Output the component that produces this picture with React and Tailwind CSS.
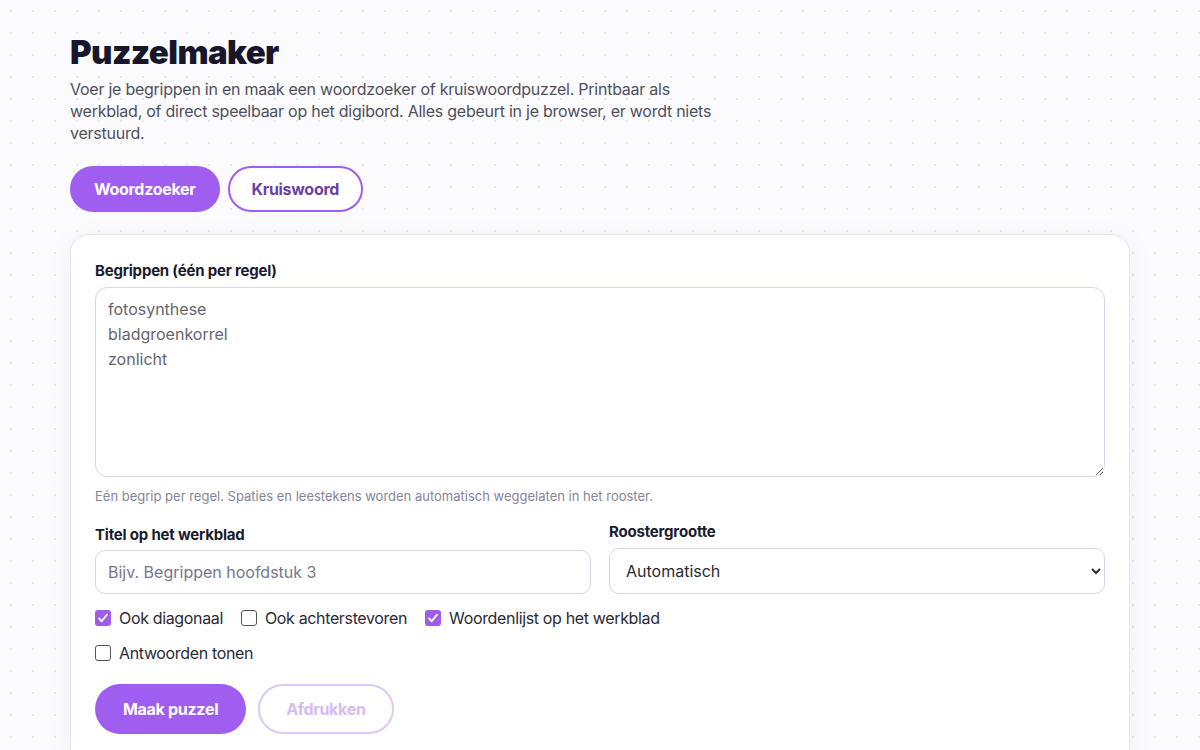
import { useState } from "react";

const font = { fontFamily: "Inter, 'Noto Sans', sans-serif" };

const Check = ({ checked, onChange, label }) => (
  <label className="flex items-center gap-[8px] cursor-pointer text-[16px] leading-[22px] tracking-[-0.35px] text-[#2a2a35]">
    <span
      onClick={onChange}
      className={
        checked
          ? "flex h-[16px] w-[16px] items-center justify-center rounded-[3px] bg-[#9f5ce8]"
          : "flex h-[16px] w-[16px] items-center justify-center rounded-[3px] border border-[#555] bg-white"
      }
    >
      {checked && (
        <svg viewBox="0 0 16 16" className="h-[14px] w-[14px]">
          <path d="M3.5 8.5l3 3.2 6-7.4" fill="none" stroke="white" strokeWidth="2.2" strokeLinecap="round" strokeLinejoin="round" />
        </svg>
      )}
    </span>
    <span onClick={onChange}>{label}</span>
  </label>
);

const tabOn = "h-[46px] rounded-full border-2 border-[#a05ef0] bg-[#a05ef0] px-[22px] text-[16px] font-bold tracking-[-0.3px] text-white";
const tabOff = "h-[46px] rounded-full border-2 border-[#a05ef0] bg-white px-[22px] text-[16px] font-bold tracking-[-0.3px] text-[#6b3fa6]";

export default function App() {
  const [mode, setMode] = useState("woord");
  const [opts, setOpts] = useState({ diag: true, back: false, list: true, answers: false });
  const toggle = (k) => setOpts({ ...opts, [k]: !opts[k] });

  return (
    <div
      style={font}
      className="min-h-[750px] bg-[#fbfbfd] bg-[radial-gradient(circle,#e4e4ec_1px,transparent_1.5px)] bg-[length:22px_22px] px-[70px] pt-[32px]"
    >
      <div className="w-[1060px]">
        <h1 className="text-[33px] font-black leading-[40px] tracking-[-0.6px] text-[#17162b]">Puzzelmaker</h1>
        <p className="mt-[6px] max-w-[660px] text-[16px] leading-[22px] tracking-[-0.25px] text-[#50505c]">
          Voer je begrippen in en maak een woordzoeker of kruiswoordpuzzel. Printbaar als werkblad, of direct speelbaar op het digibord. Alles gebeurt in je browser, er wordt niets verstuurd.
        </p>

        <div className="mt-[22px] flex gap-[8px]">
          <button onClick={() => setMode("woord")} className={mode === "woord" ? tabOn : tabOff}>
            Woordzoeker
          </button>
          <button onClick={() => setMode("kruis")} className={mode === "kruis" ? tabOn : tabOff}>
            Kruiswoord
          </button>
        </div>

        <div className="mt-[22px] rounded-[18px] border border-[#e6e2f6] bg-white px-[24px] pt-[26px] pb-[30px] shadow-[0_6px_24px_rgba(120,100,180,0.08)]">
          <label className="block text-[15px] font-bold leading-[20px] tracking-[-0.2px] text-[#1c1b2e]">Begrippen (één per regel)</label>
          <textarea
            defaultValue={"fotosynthese\nbladgroenkorrel\nzonlicht"}
            className="mt-[6px] block h-[190px] w-full resize-y rounded-[12px] border border-[#d9d5ea] px-[12px] py-[9px] text-[16px] leading-[25px] text-[#666670] outline-none"
          />
          <p className="mt-[10px] text-[13px] leading-[18px] text-[#85859a]">
            Eén begrip per regel. Spaties en leestekens worden automatisch weggelaten in het rooster.
          </p>

          <div className="mt-[17px] grid grid-cols-2 gap-[18px]">
            <div className="pt-[3px]">
              <label className="block text-[15px] font-bold leading-[20px] tracking-[-0.2px] text-[#1c1b2e]">Titel op het werkblad</label>
              <input
                placeholder="Bijv. Begrippen hoofdstuk 3"
                className="mt-[5px] block h-[44px] w-full rounded-[10px] border border-[#d9d5ea] px-[12px] text-[16px] text-[#2a2a35] outline-none placeholder:text-[#77778a]"
              />
            </div>
            <div>
              <label className="block text-[15px] font-bold leading-[20px] tracking-[-0.2px] text-[#1c1b2e]">Roostergrootte</label>
              <select className="mt-[6px] block h-[46px] w-full rounded-[10px] border border-[#d9d5ea] bg-white px-[12px] text-[16px] text-[#2a2a35] outline-none">
                <option>Automatisch</option>
                <option>10 × 10</option>
                <option>12 × 12</option>
                <option>15 × 15</option>
              </select>
            </div>
          </div>

          <div className="mt-[13px] flex w-[600px] flex-wrap gap-x-[18px] gap-y-[13px]">
            <Check checked={opts.diag} onChange={() => toggle("diag")} label="Ook diagonaal" />
            <Check checked={opts.back} onChange={() => toggle("back")} label="Ook achterstevoren" />
            <Check checked={opts.list} onChange={() => toggle("list")} label="Woordenlijst op het werkblad" />
            <Check checked={opts.answers} onChange={() => toggle("answers")} label="Antwoorden tonen" />
          </div>

          <div className="mt-[20px] flex gap-[12px]">
            <button className="h-[50px] rounded-full bg-[#a05ef0] px-[28px] text-[16px] font-bold tracking-[-0.3px] text-white">Maak puzzel</button>
            <button disabled className="h-[50px] rounded-full border-2 border-[#dcc9f6] bg-white px-[26px] text-[16px] font-bold tracking-[-0.3px] text-[#d2bdf2]">
              Afdrukken
            </button>
          </div>
        </div>
      </div>
    </div>
  );
}
